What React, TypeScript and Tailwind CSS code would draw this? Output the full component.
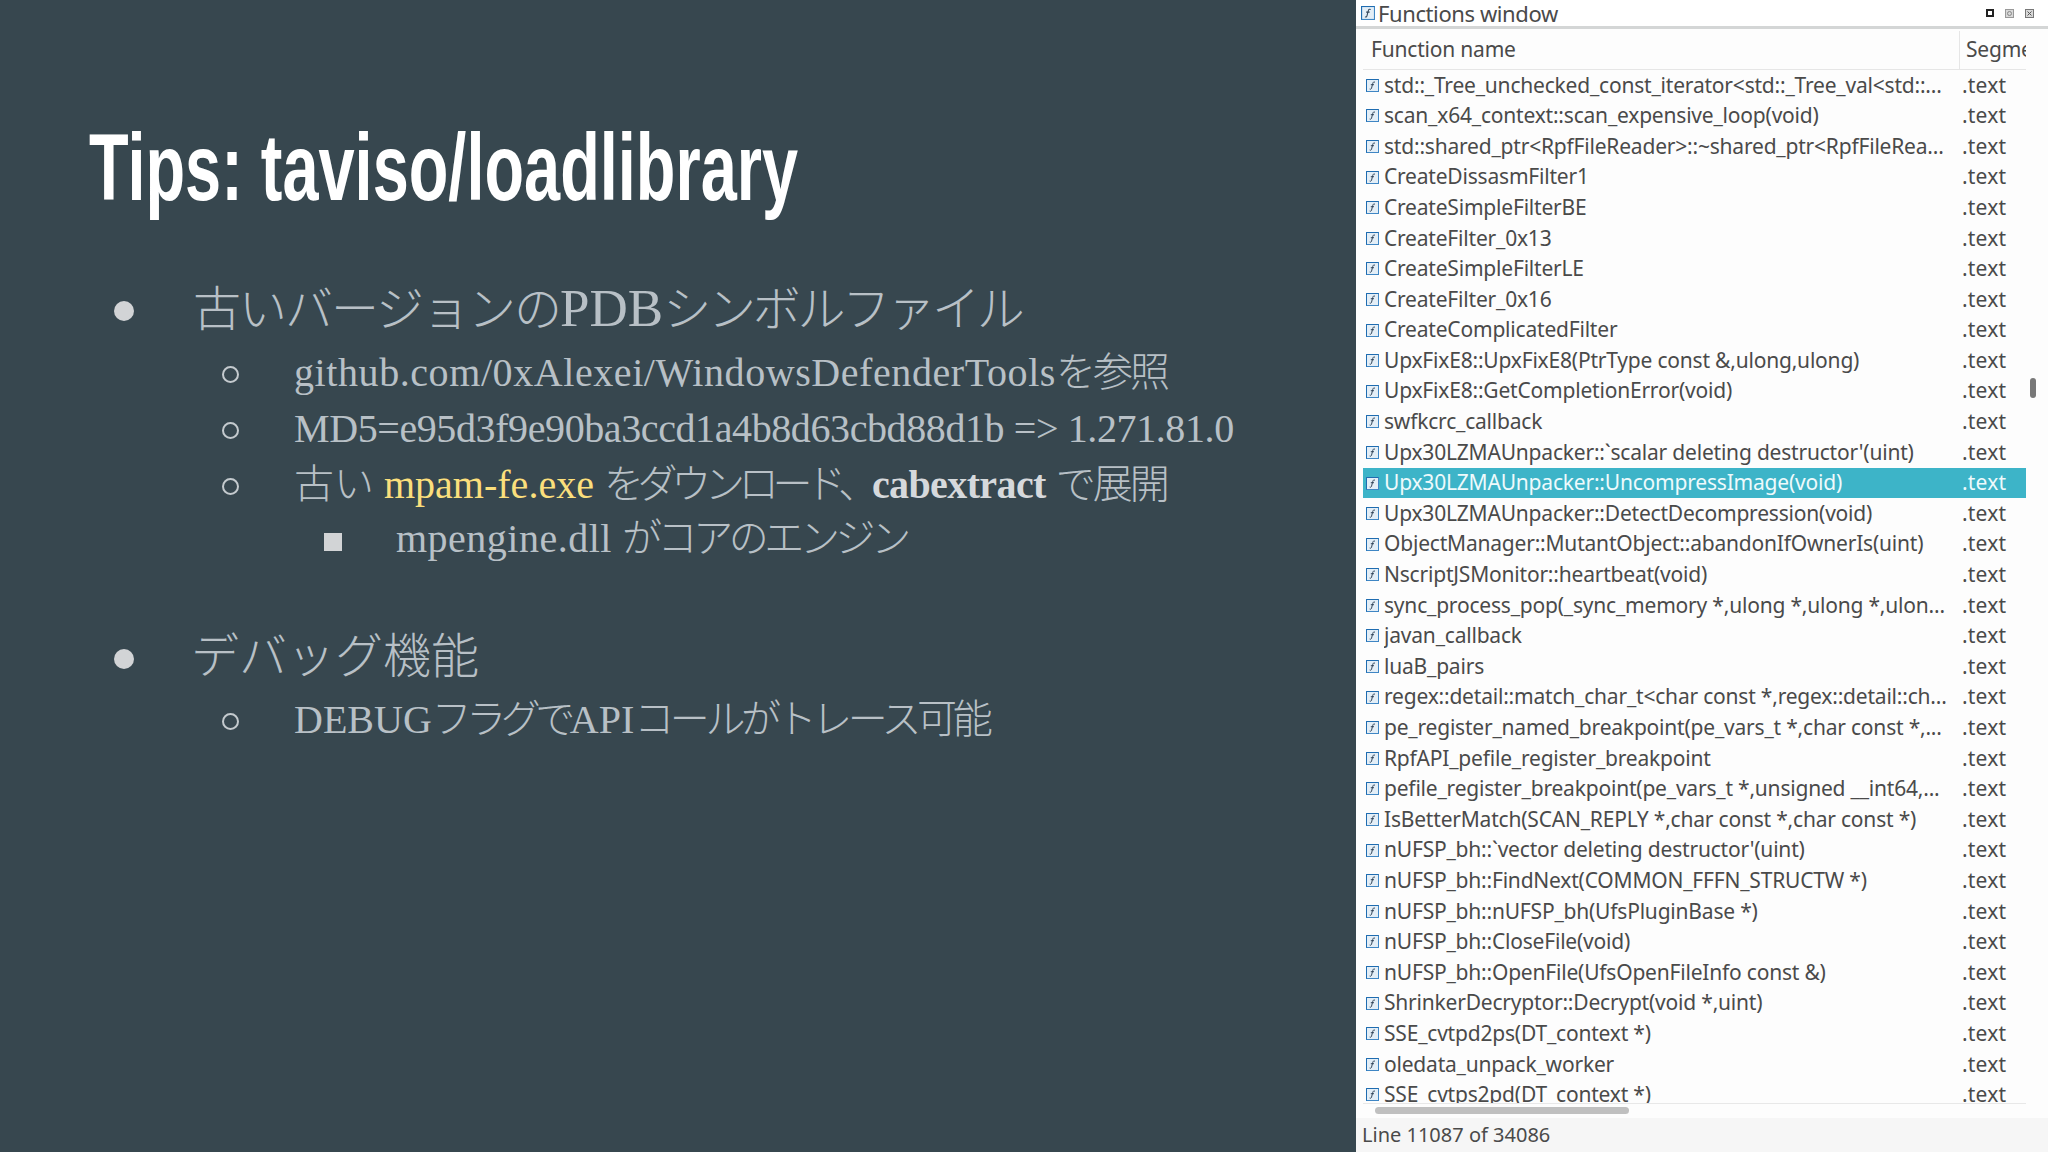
import React from 'react';

const rows = [
  'std::_Tree_unchecked_const_iterator<std::_Tree_val<std::...',
  'scan_x64_context::scan_expensive_loop(void)',
  'std::shared_ptr<RpfFileReader>::~shared_ptr<RpfFileRea...',
  'CreateDissasmFilter1',
  'CreateSimpleFilterBE',
  'CreateFilter_0x13',
  'CreateSimpleFilterLE',
  'CreateFilter_0x16',
  'CreateComplicatedFilter',
  'UpxFixE8::UpxFixE8(PtrType const &,ulong,ulong)',
  'UpxFixE8::GetCompletionError(void)',
  'swfkcrc_callback',
  "Upx30LZMAUnpacker::`scalar deleting destructor'(uint)",
  'Upx30LZMAUnpacker::UncompressImage(void)',
  'Upx30LZMAUnpacker::DetectDecompression(void)',
  'ObjectManager::MutantObject::abandonIfOwnerIs(uint)',
  'NscriptJSMonitor::heartbeat(void)',
  'sync_process_pop(_sync_memory *,ulong *,ulong *,ulon...',
  'javan_callback',
  'luaB_pairs',
  'regex::detail::match_char_t<char const *,regex::detail::ch...',
  'pe_register_named_breakpoint(pe_vars_t *,char const *,...',
  'RpfAPI_pefile_register_breakpoint',
  'pefile_register_breakpoint(pe_vars_t *,unsigned __int64,...',
  'IsBetterMatch(SCAN_REPLY *,char const *,char const *)',
  "nUFSP_bh::`vector deleting destructor'(uint)",
  'nUFSP_bh::FindNext(COMMON_FFFN_STRUCTW *)',
  'nUFSP_bh::nUFSP_bh(UfsPluginBase *)',
  'nUFSP_bh::CloseFile(void)',
  'nUFSP_bh::OpenFile(UfsOpenFileInfo const &)',
  'ShrinkerDecryptor::Decrypt(void *,uint)',
  'SSE_cvtpd2ps(DT_context *)',
  'oledata_unpack_worker',
  'SSE_cvtps2pd(DT_context *)',
];

const FuncIcon = ({ size = 13 }: { size?: number }) => (
  <svg width={size} height={size} viewBox="0 0 13 13" className="shrink-0">
    <rect x="0.5" y="0.5" width="12" height="12" fill="#e3eef7" stroke="#3f86c4" />
    <path d="M0.5 12.5 V0.5 H12.5" fill="none" stroke="#1f6cb0" />
    <path d="M9 3.2 C7.6 2.6 7 3.2 6.7 4.6 L5.6 9 C5.3 10.2 4.7 10.5 3.7 10 M4.8 5.7 H8" fill="none" stroke="#33465a" strokeWidth="1" />
  </svg>
);

const Dot = () => <span className="shrink-0 mt-[3px] w-[20px] h-[20px] rounded-full bg-[#d2d4d6]" />;
const Ring = () => <span className="shrink-0 mt-[3px] w-[17px] h-[17px] rounded-full border-2 border-[#c4cace]" />;
const Square = () => <span className="shrink-0 mt-[5px] w-[18px] h-[18px] bg-[#d2d4d6]" />;

const Item = ({ bullet, className, children }: { bullet: React.ReactNode; className: string; children: React.ReactNode }) => (
  <div className={`flex items-center ${className}`}>
    <div className="w-0 shrink-0 flex justify-center -translate-x-[var(--b)]">{bullet}</div>
    <div className="whitespace-nowrap">{children}</div>
  </div>
);

export default function App() {
  return (
    <div className="flex w-[2048px] h-[1152px] overflow-hidden bg-[#37474f]">
      <div className="w-[1356px] shrink-0 pl-[88px] pt-[112px] font-['Liberation_Serif','Noto_Sans_CJK_JP',serif] text-[#b8c0c6]">
        <h1 className="h-[110px] ml-[1px] text-[95px] leading-[110px] font-bold text-white font-['Liberation_Sans',sans-serif] whitespace-nowrap origin-left scale-x-[0.683]">
          Tips: taviso/loadlibrary
        </h1>
        <div className="mt-[59px] flex flex-col font-light">
          <Item bullet={<Dot />} className="h-[56px] pl-[105px] [--b:69px] text-[48px]">
            <span className="tracking-[-2px]">古いバージョンの</span>
            <span className="text-[53px]">PDB</span>
            <span className="tracking-[-3.2px]">シンボルファイル</span>
          </Item>
          <Item bullet={<Ring />} className="h-[56px] mt-[8px] pl-[206px] [--b:64px] text-[40px]">
            <span className="tracking-[0.58px]">github.com/0xAlexei/WindowsDefenderTools</span>
            <span className="tracking-[-3px]">を参照</span>
          </Item>
          <Item bullet={<Ring />} className="h-[56px] pl-[206px] [--b:64px] text-[40px] tracking-[-0.4px]">MD5=e95d3f9e90ba3ccd1a4b8d63cbd88d1b =&gt; 1.271.81.0</Item>
          <Item bullet={<Ring />} className="h-[55px] pl-[206px] [--b:64px] text-[40px]">
            古い <span className="text-[#fbdf7c]">mpam-fe.exe</span> <span className="tracking-[-6.3px]">をダウンロード、</span><span className="font-bold text-[#d6d9dc] tracking-[-0.6px]">cabextract</span> <span className="tracking-[-3px]">で展開</span>
          </Item>
          <Item bullet={<Square />} className="h-[54px] pl-[308px] [--b:63px] text-[40px]">
            <span className="tracking-[0.5px]">mpengine.dll</span> <span className="tracking-[-4.4px]">がコアのエンジン</span>
          </Item>
          <Item bullet={<Dot />} className="h-[64px] mt-[59px] pl-[103px] [--b:67px] text-[48px]">デバッグ機能</Item>
          <Item bullet={<Ring />} className="h-[56px] mt-[3px] pl-[206px] [--b:64px] text-[40px]">
            DEBUG<span className="tracking-[-5.5px]">フラグで</span>API<span className="tracking-[-4.4px]">コールがトレース可能</span>
          </Item>
        </div>
      </div>

      <div className="flex-1 flex flex-col bg-[#fdfdfd] text-[#4a4a4a] font-['Noto_Sans',sans-serif] text-[21px] tracking-[-0.2px]">
        <div className="h-[29px] shrink-0 flex items-center pl-[5px] pr-[14px] bg-white border-b-[3px] border-[#d4d6d6]">
          <FuncIcon size={14} />
          <span className="ml-[3px] text-[22px] leading-[26px] tracking-[-0.4px]">Functions window</span>
          <div className="ml-auto flex items-center gap-[11px]">
            <span className="w-[8px] h-[8px] border-2 border-[#222] bg-white" />
            <svg width="9" height="9" viewBox="0 0 9 9">
              <rect x="0.5" y="0.5" width="8" height="8" fill="#d8d8d8" stroke="#999" />
              <circle cx="4.5" cy="4.5" r="2" fill="none" stroke="#888" />
            </svg>
            <svg width="9" height="9" viewBox="0 0 9 9">
              <rect x="0.5" y="0.5" width="8" height="8" fill="#d8d8d8" stroke="#777" />
              <path d="M2.5 2.5 L6.5 6.5 M6.5 2.5 L2.5 6.5" stroke="#555" />
            </svg>
          </div>
        </div>
        <div className="flex-1 min-h-0 flex">
          <div className="w-[670px] pl-[7px] flex flex-col min-h-0">
            <div className="h-[41px] shrink-0 flex items-center border-b border-[#e6e6e6] text-[21px] pt-[2px]">
              <div className="w-[597px] h-full flex items-center pl-[8px] border-r border-[#e6e6e6]">Function name</div>
              <div className="flex-1 pl-[6px] overflow-hidden whitespace-nowrap">Segment</div>
            </div>
            <div className="flex-1 min-h-0 overflow-hidden border-b border-[#e8e8e8]">
              {rows.map((name, i) => (
                <div key={name} className={`h-[30.6px] flex items-center pl-[3px] whitespace-nowrap ${i === 13 ? 'bg-[#3db4c8] text-[#eefafc]' : ''}`}>
                  <FuncIcon />
                  <span className="ml-[5px] w-[575px] overflow-hidden">{name}</span>
                  <span className="ml-[3px] tracking-[0.2px]">.text</span>
                </div>
              ))}
            </div>
            <div className="h-[14px] shrink-0 pt-[3px] pl-[12px]">
              <div className="w-[254px] h-[7px] rounded-full bg-[#c0c0c0]" />
            </div>
          </div>
          <div className="flex-1 pt-[349px] pl-[4px]">
            <div className="w-[6px] h-[20px] rounded-full bg-[#787878]" />
          </div>
        </div>
        <div className="h-[34px] shrink-0 flex items-center pl-[6px] bg-[#f6f6f6] text-[20px] tracking-normal">Line 11087 of 34086</div>
      </div>
    </div>
  );
}
